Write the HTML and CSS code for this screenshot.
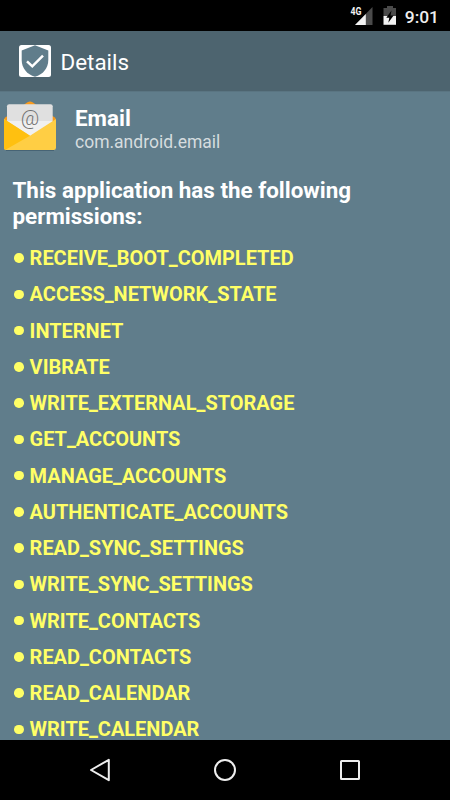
FILE: index.html
```html
<!DOCTYPE html>
<html lang="en">
<head>
  <meta charset="UTF-8">
  <meta name="viewport" content="width=device-width, initial-scale=1.0">
  <title>Details</title>
  <link rel="stylesheet" href="styles.css">
</head>
<body>
  <div class="screen">
    <!-- Status bar -->
    <div class="status-bar">
      <svg class="signal" width="24" height="20" viewBox="0 0 24 20">
        <path d="M23.500 2V20H6Z" fill="#4a4a4a"/>
        <path d="M16.800 9V20H6Z" fill="#f2f2f2"/>
        <text class="network" x="1.500" y="10" textLength="11" lengthAdjust="spacingAndGlyphs">4G</text>
      </svg>
      <svg class="battery" width="14" height="20" viewBox="0 0 14 20">
        <path d="M4 1h6v2h3v8H0.500v-8H4z" fill="#4a4a4a"/>
        <path d="M0.500 11H13V19.800H0.500z" fill="#f2f2f2"/>
        <path d="M8.500 5.500L3.300 12.800H6.300L5.300 17.800L10.600 10.500H7.500z" fill="#000"/>
      </svg>
      <span class="clock">9:01</span>
    </div>

    <!-- Action bar -->
    <div class="action-bar">
      <svg class="logo" width="32" height="32" viewBox="0 0 32 32">
        <rect width="32" height="32" rx="2.500" fill="#fff"/>
        <path d="M16 0.200L29.300 5.500V15C29.300 23 24 29.600 16 31.800C8 29.600 2.700 23 2.700 15V5.500Z" fill="#607d8b"/>
        <path d="M8 16.300L13.300 21.300L24 10.600" fill="none" stroke="#fff" stroke-width="2.500"/>
      </svg>
      <h1>Details</h1>
    </div>

    <div class="content">
      <!-- App info -->
      <div class="app-info">
        <svg class="app-icon" width="54" height="52" viewBox="0 0 54 52">
          <path d="M0.500 17L23.500 1.300Q26 -0.300 28.500 1.300L51.500 17V22H0.500Z" fill="#f99a1c"/>
          <path d="M2 49.300H50" stroke="#425e70" stroke-width="1"/>
          <path d="M3 24V5.300Q3 3.200 5.200 3.200H46.500Q48.700 3.200 48.700 5.300V24Z" fill="#e0e0e0"/>
          <path d="M3 20H48.700V36H3Z" fill="#f0f0f0"/>
          <path d="M0 18L26 34.800L52 18V46.700Q52 49 49.700 49H2.300Q0 49 0 46.700Z" fill="#ffce44"/>
          <path d="M0 18L26 34.800L1.500 48.800Q0 48.500 0 46.700Z" fill="#ffc010"/>
          <text class="at" x="26" y="24" text-anchor="middle" textLength="18.500" lengthAdjust="spacingAndGlyphs">@</text>
        </svg>
        <div class="app-text">
          <div class="app-name">Email</div>
          <div class="app-package">com.android.email</div>
        </div>
      </div>

      <!-- Permissions -->
      <h2>This application has the following permissions:</h2>
      <ul class="permissions">
        <li>RECEIVE_BOOT_COMPLETED</li>
        <li>ACCESS_NETWORK_STATE</li>
        <li>INTERNET</li>
        <li>VIBRATE</li>
        <li>WRITE_EXTERNAL_STORAGE</li>
        <li>GET_ACCOUNTS</li>
        <li>MANAGE_ACCOUNTS</li>
        <li>AUTHENTICATE_ACCOUNTS</li>
        <li>READ_SYNC_SETTINGS</li>
        <li>WRITE_SYNC_SETTINGS</li>
        <li>WRITE_CONTACTS</li>
        <li>READ_CONTACTS</li>
        <li>READ_CALENDAR</li>
        <li>WRITE_CALENDAR</li>
      </ul>
    </div>

    <!-- Navigation bar -->
    <div class="nav-bar">
      <svg width="24" height="24" viewBox="0 0 24 24">
        <path d="M20.800 1.800V22.200L3 12Z"/>
      </svg>
      <svg width="24" height="24" viewBox="0 0 24 24">
        <circle cx="12" cy="12" r="10"/>
      </svg>
      <svg width="24" height="24" viewBox="0 0 24 24">
        <rect x="3" y="3" width="18" height="18" rx="0.500"/>
      </svg>
    </div>
  </div>
</body>
</html>
```

FILE: styles.css
```css
body {
  margin: 0;
  font-family: Roboto, sans-serif;
  background-color: #000;
  color: #fff;
}

.screen {
  width: 450px;
  height: 800px;
  display: flex;
  flex-direction: column;
  overflow: hidden;
}

.status-bar {
  flex: 0 0 31px;
  display: flex;
  justify-content: flex-end;
  align-items: center;
  padding-right: 11px;
  box-sizing: border-box;
}

.signal {
  margin: 0 10px 1px 0;
}

.network {
  font-size: 11px;
  font-weight: 700;
  fill: #f2f2f2;
}

.battery {
  margin: 0 7.5px 1px 0;
}

.clock {
  font-size: 17.4px;
  font-weight: 500;
  line-height: 20px;
  padding-top: 2px;
  color: #eee;
}

.action-bar {
  flex: 0 0 60px;
  display: flex;
  align-items: center;
  gap: 9.5px;
  padding-left: 19px;
  background-color: #4d646f;
}

.action-bar h1 {
  margin: 2px 0 0;
  font-size: 22.4px;
  font-weight: 400;
}

.content {
  flex: 1;
  min-height: 0;
  overflow: hidden;
  background-color: #607d8b;
  border-top: 1px solid #5a7582;
  box-sizing: border-box;
}

.app-info {
  display: flex;
  align-items: flex-start;
  height: 70px;
  padding: 9px 0 0 4px;
  box-sizing: border-box;
}

.at {
  font-size: 19.5px;
  font-weight: 300;
  fill: #707070;
}

.app-text {
  padding: 4px 0 0 17px;
}

.app-name {
  font-size: 22.4px;
  font-weight: 700;
  line-height: 26px;
}

.app-package {
  font-size: 17.5px;
  line-height: 22px;
  color: #d5dcdf;
}

.content h2 {
  margin: 15px 12.5px 0;
  font-size: 22.4px;
  font-weight: 700;
  line-height: 26px;
}

.permissions {
  list-style: none;
  margin: 11px 0 0;
  padding: 0 0 0 14px;
}

.permissions li {
  display: flex;
  align-items: center;
  gap: 6px;
  height: 36.25px;
  font-size: 19.97px;
  font-weight: 700;
  color: #ffff66;
}

.permissions li::before {
  content: "";
  width: 9.6px;
  height: 9.6px;
  border-radius: 50%;
  background-color: #ffff66;
}

.nav-bar {
  flex: 0 0 60px;
  display: flex;
  justify-content: center;
  align-items: center;
  gap: 101px;
}

.nav-bar svg {
  fill: none;
  stroke: #eee;
  stroke-width: 2;
  stroke-linejoin: round;
}
```
